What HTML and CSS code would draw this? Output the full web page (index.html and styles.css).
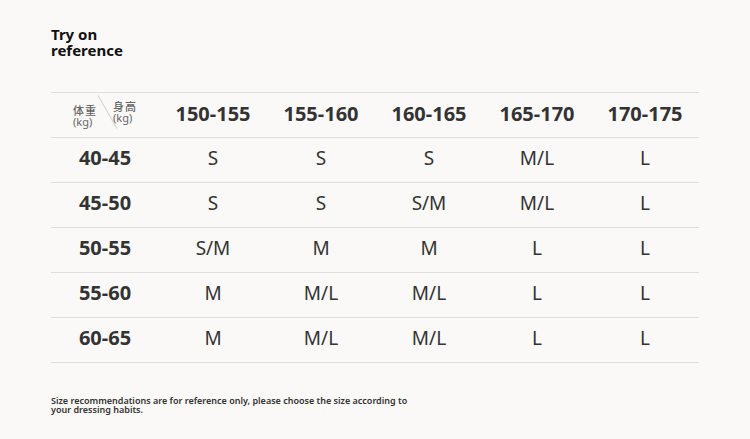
FILE: index.html
```html
<!DOCTYPE html>
<html>
<head>
<meta charset="utf-8">
<link rel="stylesheet" href="styles.css">
</head>
<body>
<div class="page">
  <h1 class="title"><span>Try on</span><span>reference</span></h1>
  <div class="table">
    <div class="row head">
      <div class="cell corner">
        <span class="c-weight"><span class="cjk">体重</span><span>(kg)</span></span>
        <span class="c-slash"></span>
        <span class="c-height"><span class="cjk">身高</span><span>(kg)</span></span>
      </div>
      <div class="cell">150-155</div>
      <div class="cell">155-160</div>
      <div class="cell">160-165</div>
      <div class="cell">165-170</div>
      <div class="cell">170-175</div>
    </div>
    <div class="row"><div class="cell label">40-45</div><div class="cell">S</div><div class="cell">S</div><div class="cell">S</div><div class="cell">M/L</div><div class="cell">L</div></div>
    <div class="row"><div class="cell label">45-50</div><div class="cell">S</div><div class="cell">S</div><div class="cell">S/M</div><div class="cell">M/L</div><div class="cell">L</div></div>
    <div class="row"><div class="cell label">50-55</div><div class="cell">S/M</div><div class="cell">M</div><div class="cell">M</div><div class="cell">L</div><div class="cell">L</div></div>
    <div class="row"><div class="cell label">55-60</div><div class="cell">M</div><div class="cell">M/L</div><div class="cell">M/L</div><div class="cell">L</div><div class="cell">L</div></div>
    <div class="row"><div class="cell label">60-65</div><div class="cell">M</div><div class="cell">M/L</div><div class="cell">M/L</div><div class="cell">L</div><div class="cell">L</div></div>
  </div>
  <p class="note"><span>Size recommendations are for reference only, please choose the size according to</span><span>your dressing habits.</span></p>
</div>
</body>
</html>
```
FILE: styles.css
```css
html, body {
  margin: 0;
  padding: 0;
  background: #faf9f7;
}
body {
  font-family: "Noto Sans", "Noto Sans CJK SC", sans-serif;
  color: #333;
  width: 750px;
  height: 439px;
  overflow: hidden;
}
.page {
  padding: 26px 50px 0 51px;
}
.title {
  margin: 0;
  font-size: 15px;
  line-height: 16px;
  font-weight: 700;
  color: #111;
  display: flex;
  flex-direction: column;
  align-items: flex-start;
}
.title span {
  display: block;
  height: 16px;
  line-height: 16px;
}
.table {
  margin-top: 34px;
  width: 648px;
  border-top: 1px solid #e0dedb;
}
.row {
  display: grid;
  grid-template-columns: repeat(6, 108px);
  height: 44px;
  border-bottom: 1px solid #e0dedb;
  align-items: center;
}
.cell {
  text-align: center;
  font-size: 19px;
  line-height: 24px;
  padding-bottom: 4px;
  color: #333;
}
.head .cell {
  padding-bottom: 2px;
}
.head .cell, .label {
  font-size: 20px;
  font-weight: 700;
  color: #333;
}
.head .corner {
  position: relative;
  height: 44px;
  padding: 0;
  font-size: 11px;
  font-weight: 400;
  color: #666;
}
.c-weight, .c-height {
  position: absolute;
  display: flex;
  flex-direction: column;
  align-items: flex-start;
}
.c-weight span, .c-height span {
  display: block;
  height: 11px;
  line-height: 11px;
}
.c-weight .cjk, .c-height .cjk {
  letter-spacing: 1px;
  font-weight: 500;
}
.c-weight {
  left: 22px;
  top: 12px;
}
.c-height {
  left: 62px;
  top: 8px;
}
.c-slash {
  position: absolute;
  left: 56px;
  top: 0;
  width: 1px;
  height: 38px;
  background: #d3d1ce;
  transform: rotate(-30deg);
}
.note {
  margin: 33px 0 0 0;
  font-size: 9px;
  font-weight: 600;
  color: #333;
  display: flex;
  flex-direction: column;
  align-items: flex-start;
}
.note span {
  display: block;
  height: 9px;
  line-height: 9px;
}
```
